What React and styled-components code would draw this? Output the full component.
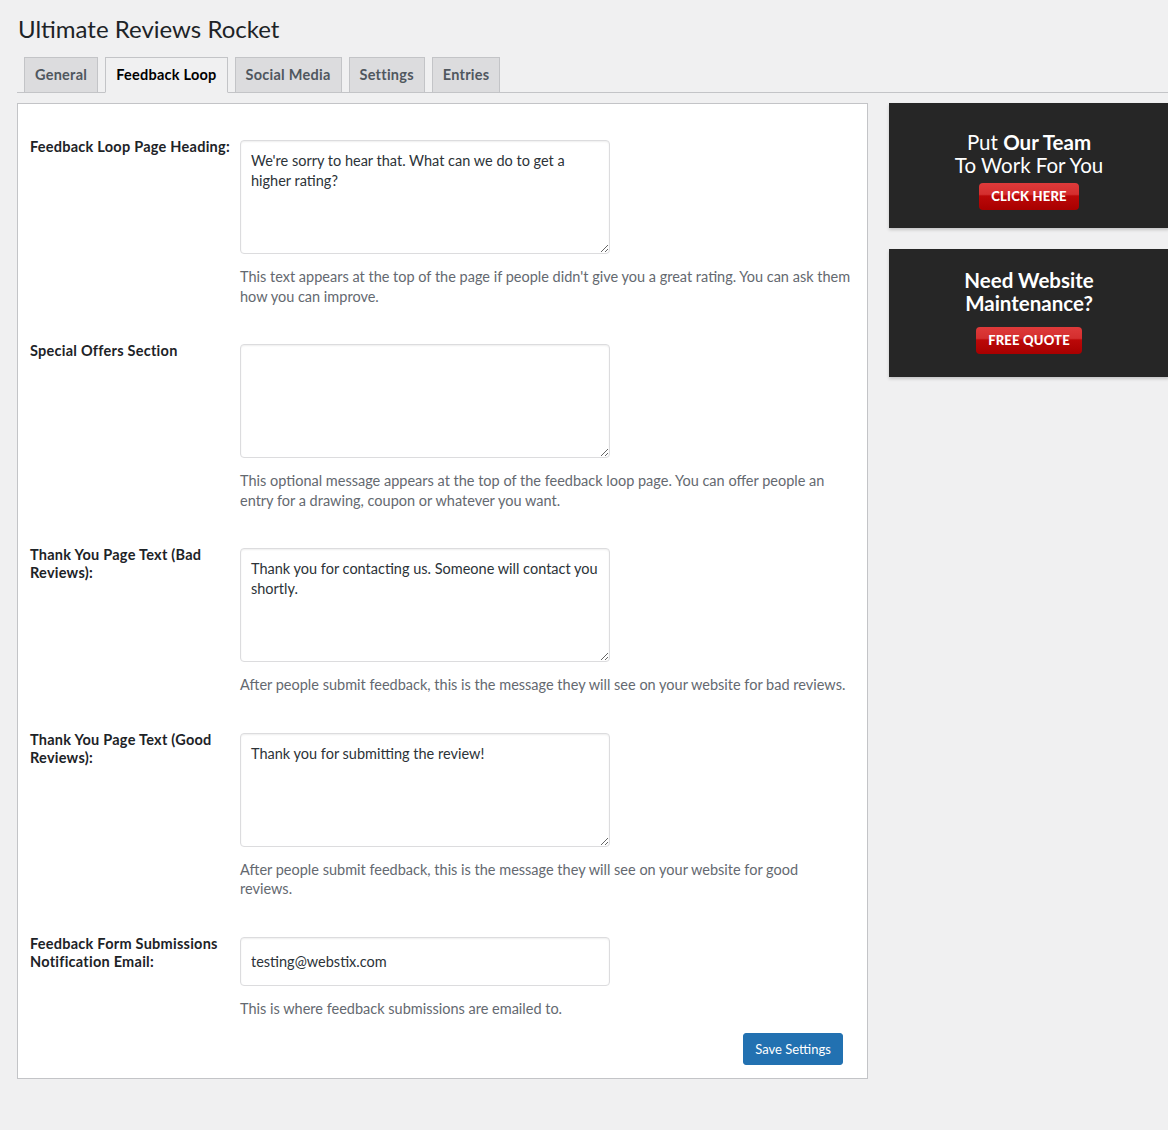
import React from "react"
import styled, { createGlobalStyle } from "styled-components"

const font = `Lato, "Open Sans", "Noto Sans", sans-serif`

const GlobalStyle = createGlobalStyle`
  html, body {
    margin: 0;
    background: #f0f0f1;
    font-family: ${font};
    color: #1d2327;
  }
  * {
    box-sizing: border-box;
  }
`

const Wrap = styled.div`
  padding: 14px 0 53px 17px;
  overflow: hidden;
`

const Title = styled.h1`
  margin: 0;
  font-size: 24px;
  font-weight: 400;
  line-height: 29px;
  padding-left: 1px;
  color: #1d2327;
`

const TabBar = styled.nav`
  display: flex;
  margin-top: 14px;
  padding-left: 7px;
  border-bottom: 1px solid #c3c4c7;
`

const Tab = styled.a`
  display: block;
  margin-right: 7px;
  margin-bottom: -1px;
  padding: 5px 10px;
  font-size: 14.5px;
  font-weight: 700;
  line-height: 24px;
  letter-spacing: 0.25px;
  color: ${(p) => (p.$active ? "#000" : "#50575e")};
  background: ${(p) => (p.$active ? "#f0f0f1" : "#dcdcde")};
  border: 1px solid #c3c4c7;
  border-bottom-color: ${(p) => (p.$active ? "#f0f0f1" : "#c3c4c7")};
  text-decoration: none;
  cursor: pointer;
`

const Columns = styled.div`
  display: flex;
  align-items: flex-start;
  gap: 21px;
  margin-top: 10px;
`

const Panel = styled.form`
  flex: 0 0 851px;
  background: #fff;
  border: 1px solid #c3c4c7;
  padding: 36px 9px 13px 12px;
`

const Rows = styled.div`
  display: flex;
  flex-direction: column;
  gap: 38px;
`

const Row = styled.div`
  display: grid;
  grid-template-columns: 210px 1fr;
`

const Label = styled.label`
  margin-top: -2px;
  padding-right: 10px;
  font-size: 14.5px;
  font-weight: 700;
  line-height: 18px;
  letter-spacing: 0.25px;
  color: #1d2327;
`

const Field = styled.div`
  display: flex;
  flex-direction: column;
  align-items: flex-start;
`

const TextArea = styled.textarea`
  display: block;
  width: 370px;
  height: 114px;
  margin: 0;
  padding: 10px 8px 10px 10px;
  font-family: ${font};
  font-size: 14.5px;
  line-height: 20px;
  color: #2c3338;
  background: #fff;
  border: 1px solid #dcdcde;
  border-radius: 4px;
  box-shadow: inset 0 1px 2px rgba(0, 0, 0, 0.07);
  outline: none;
`

const TextInput = styled.input`
  display: block;
  width: 370px;
  height: 49px;
  margin: 0;
  padding: 0 10px;
  font-family: ${font};
  font-size: 14.5px;
  color: #2c3338;
  background: #fff;
  border: 1px solid #dcdcde;
  border-radius: 4px;
  box-shadow: inset 0 1px 2px rgba(0, 0, 0, 0.07);
  outline: none;
`

const Description = styled.p`
  max-width: 612px;
  margin: 13px 0 0;
  font-size: 14.5px;
  line-height: 19.5px;
  color: #646970;
`

const Submit = styled.div`
  display: flex;
  justify-content: flex-end;
  margin-top: 15px;
  padding-right: 15px;
`

const SaveButton = styled.button`
  width: 100px;
  height: 32px;
  padding: 0 10px;
  font-family: ${font};
  font-size: 13px;
  color: #fff;
  background: #2271b1;
  border: 1px solid #2271b1;
  border-radius: 3px;
  cursor: pointer;
`

const Sidebar = styled.aside`
  flex: 0 0 280px;
  display: flex;
  flex-direction: column;
  gap: 21px;
`

const Promo = styled.div`
  display: flex;
  flex-direction: column;
  align-items: center;
  padding: ${(p) => p.$pad};
  background: #262626;
  color: #fff;
  text-align: center;
  box-shadow: 0 2px 3px rgba(0, 0, 0, 0.18);
`

const PromoText = styled.div`
  font-size: 20.5px;
  line-height: 23px;
  font-weight: ${(p) => (p.$bold ? 700 : 400)};

  b {
    font-weight: 700;
  }
`

const RedButton = styled.a`
  display: block;
  margin-top: ${(p) => p.$gap};
  padding: 0 12px;
  height: 27px;
  font-size: 13px;
  font-weight: 900;
  line-height: 27px;
  letter-spacing: 0.2px;
  color: #fff;
  text-transform: uppercase;
  text-decoration: none;
  border-radius: 4px;
  background: linear-gradient(
    #de3a3a 0%,
    #d42e2e 42%,
    #bb0808 48%,
    #a80000 100%
  );
  cursor: pointer;
`

const fields = [
  {
    label: "Feedback Loop Page Heading:",
    value: "We're sorry to hear that. What can we do to get a higher rating?",
    help: "This text appears at the top of the page if people didn't give you a great rating. You can ask them how you can improve.",
  },
  {
    label: "Special Offers Section",
    value: "",
    help: "This optional message appears at the top of the feedback loop page. You can offer people an entry for a drawing, coupon or whatever you want.",
  },
  {
    label: "Thank You Page Text (Bad Reviews):",
    value: "Thank you for contacting us. Someone will contact you shortly.",
    help: "After people submit feedback, this is the message they will see on your website for bad reviews.",
  },
  {
    label: "Thank You Page Text (Good Reviews):",
    value: "Thank you for submitting the review!",
    help: "After people submit feedback, this is the message they will see on your website for good reviews.",
  },
]

const tabs = ["General", "Feedback Loop", "Social Media", "Settings", "Entries"]

export default function App() {
  return (
    <Wrap>
      <GlobalStyle />
      <Title>Ultimate Reviews Rocket</Title>
      <TabBar>
        {tabs.map((t) => (
          <Tab key={t} $active={t === "Feedback Loop"}>
            {t}
          </Tab>
        ))}
      </TabBar>
      <Columns>
        <Panel onSubmit={(e) => e.preventDefault()}>
          <Rows>
            {fields.map((f) => (
              <Row key={f.label}>
                <Label>{f.label}</Label>
                <Field>
                  <TextArea defaultValue={f.value} />
                  <Description>{f.help}</Description>
                </Field>
              </Row>
            ))}
            <Row>
              <Label>Feedback Form Submissions Notification Email:</Label>
              <Field>
                <TextInput type="email" defaultValue="testing@webstix.com" />
                <Description>
                  This is where feedback submissions are emailed to.
                </Description>
              </Field>
            </Row>
          </Rows>
          <Submit>
            <SaveButton type="submit">Save Settings</SaveButton>
          </Submit>
        </Panel>
        <Sidebar>
          <Promo $pad="28px 0 18px">
            <PromoText>
              Put <b>Our Team</b>
            </PromoText>
            <PromoText>To Work For You</PromoText>
            <RedButton $gap="6px">Click Here</RedButton>
          </Promo>
          <Promo $pad="20px 0 23px">
            <PromoText $bold>Need Website</PromoText>
            <PromoText $bold>Maintenance?</PromoText>
            <RedButton $gap="12px">Free Quote</RedButton>
          </Promo>
        </Sidebar>
      </Columns>
    </Wrap>
  )
}
